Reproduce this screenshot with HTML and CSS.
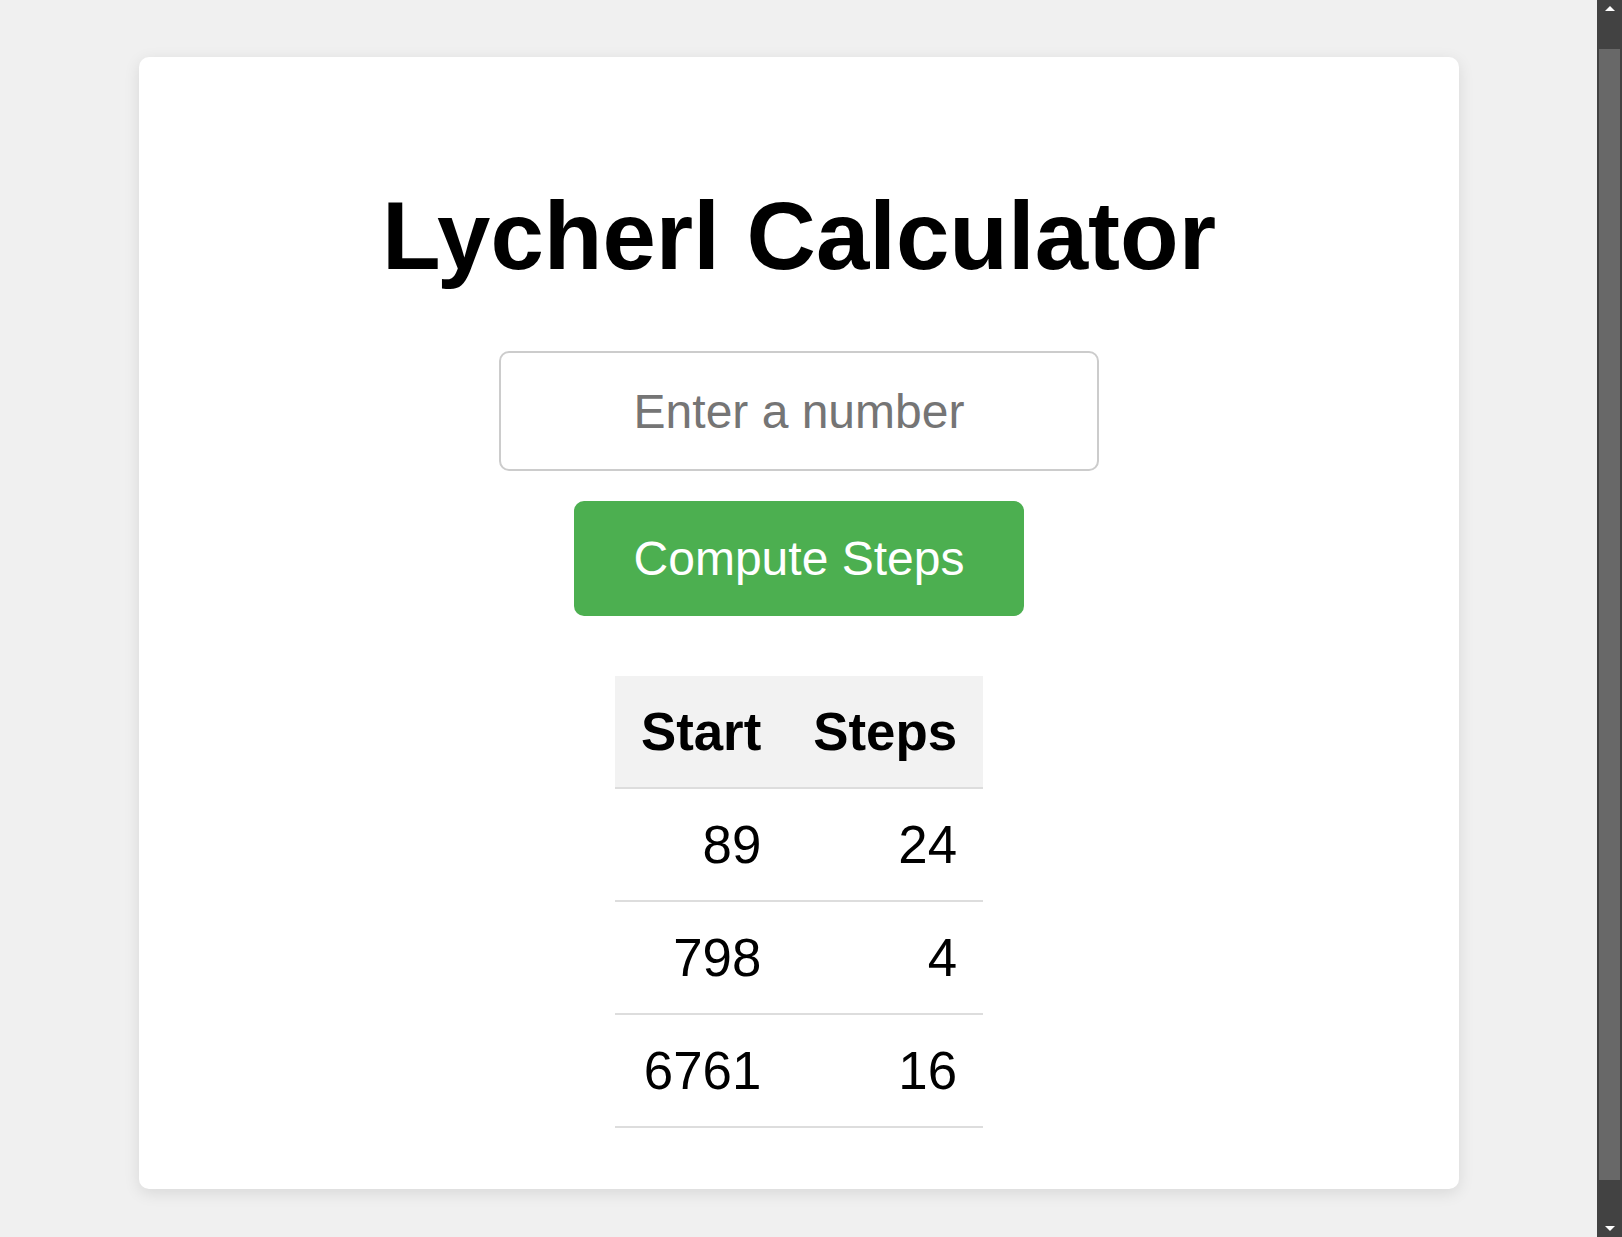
FILE: index.html
```
<!DOCTYPE html>
<html lang="en">
<head>
<meta charset="utf-8">
<title>Lycherl Calculator</title>
<link rel="stylesheet" href="styles.css">
</head>
<body>
<div class="card">
  <h1 class="title">Lycherl Calculator</h1>
  <input class="num-input" type="text" placeholder="Enter a number">
  <button class="compute-btn" type="button">Compute Steps</button>
  <table class="results">
    <thead>
      <tr><th>Start</th><th>Steps</th></tr>
    </thead>
    <tbody>
      <tr><td>89</td><td>24</td></tr>
      <tr><td>798</td><td>4</td></tr>
      <tr><td>6761</td><td>16</td></tr>
    </tbody>
  </table>
</div>
<div class="scrollbar" aria-hidden="true">
  <span class="sb-arrow sb-up"></span>
  <span class="sb-track"><span class="sb-thumb"></span></span>
  <span class="sb-arrow sb-down"></span>
</div>
</body>
</html>
```
FILE: styles.css
```
html {
  background: #f0f0f0;
}
body {
  margin: 0;
  padding: 57px 163px 40px 139px;
  background: #f0f0f0;
  font-family: "Liberation Sans", Arial, sans-serif;
  font-size: 48px;
  color: #000;
}
.card {
  background: #fff;
  border-radius: 10px;
  box-shadow: 0 4px 16px rgba(0, 0, 0, 0.1);
  padding: 64px 64px 61px;
  display: flex;
  flex-direction: column;
  align-items: center;
}
.title {
  font-size: 96px;
  font-weight: bold;
  line-height: 110px;
  margin: 60px 0 60px;
}
.num-input {
  box-sizing: border-box;
  width: 600px;
  height: 120px;
  padding: 30px;
  border: 2px solid #ccc;
  border-radius: 10px;
  font-family: inherit;
  font-size: 48px;
  text-align: center;
  margin: 0 0 30px;
  background: #fff;
  color: #000;
  outline: none;
}
.num-input::placeholder {
  color: #757575;
}
.compute-btn {
  box-sizing: border-box;
  height: 115px;
  padding: 0 60px;
  border: none;
  border-radius: 10px;
  background: #4caf50;
  color: #fff;
  font-family: inherit;
  font-size: 48px;
  margin: 0 0 60px;
  cursor: pointer;
}
.results {
  border-collapse: collapse;
  font-size: 52.8px;
}
.results th,
.results td {
  padding: 25px 26px;
  text-align: right;
  border-bottom: 2px solid #ddd;
  line-height: normal;
}
.results th {
  background: #f2f2f2;
  font-weight: bold;
}
.scrollbar {
  position: fixed;
  top: 0;
  right: 0;
  width: 25px;
  height: 100vh;
  background: #424242;
  display: flex;
  flex-direction: column;
  align-items: center;
}
.sb-arrow {
  flex: 0 0 17px;
  width: 25px;
  display: flex;
  align-items: center;
  justify-content: center;
}
.sb-up::before,
.sb-down::before {
  content: "";
  width: 0;
  height: 0;
  border-left: 5px solid transparent;
  border-right: 5px solid transparent;
}
.sb-up::before {
  border-bottom: 5px solid #fff;
}
.sb-down::before {
  border-top: 5px solid #fff;
}
.sb-track {
  flex: 1;
  width: 25px;
  display: flex;
  justify-content: center;
  padding-top: 32px;
  box-sizing: border-box;
}
.sb-thumb {
  width: 21px;
  height: 1131px;
  background: #686868;
}
```
